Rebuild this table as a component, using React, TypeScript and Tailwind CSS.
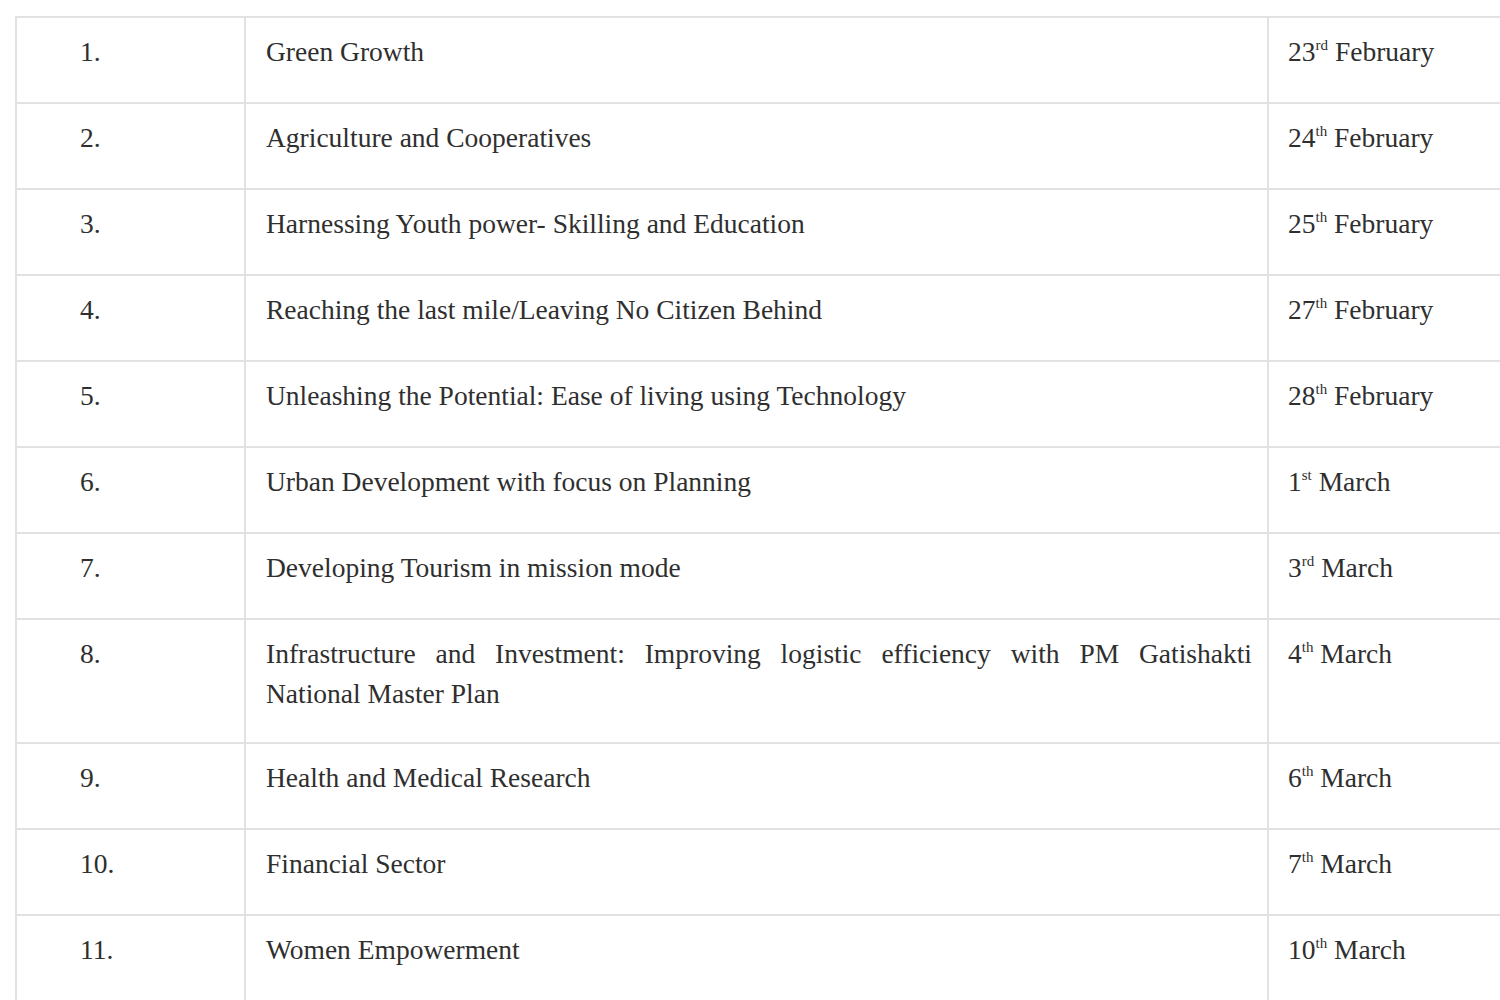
import React from "react";

type Row = { n: string; topic: string; day: string; sup: string; month: string; tall?: boolean };

const rows: Row[] = [
  { n: "1.", topic: "Green Growth", day: "23", sup: "rd", month: "February" },
  { n: "2.", topic: "Agriculture and Cooperatives", day: "24", sup: "th", month: "February" },
  { n: "3.", topic: "Harnessing Youth power- Skilling and Education", day: "25", sup: "th", month: "February" },
  { n: "4.", topic: "Reaching the last mile/Leaving No Citizen Behind", day: "27", sup: "th", month: "February" },
  { n: "5.", topic: "Unleashing the Potential: Ease of living using Technology", day: "28", sup: "th", month: "February" },
  { n: "6.", topic: "Urban Development with focus on Planning", day: "1", sup: "st", month: "March" },
  { n: "7.", topic: "Developing Tourism in mission mode", day: "3", sup: "rd", month: "March" },
  {
    n: "8.",
    topic: "Infrastructure and Investment: Improving logistic efficiency with PM Gatishakti|National Master Plan",
    day: "4",
    sup: "th",
    month: "March",
    tall: true,
  },
  { n: "9.", topic: "Health and Medical Research", day: "6", sup: "th", month: "March" },
  { n: "10.", topic: "Financial Sector", day: "7", sup: "th", month: "March" },
  { n: "11.", topic: "Women Empowerment", day: "10", sup: "th", month: "March" },
];

export default function App() {
  return (
    <div className="w-[1500px] h-[1000px] overflow-hidden bg-white pt-[16px] pl-[15px]">
      <table className="border-collapse w-[1500px] text-[27.5px] leading-[40px] text-[#2f2f2f] font-['Liberation_Serif','Times_New_Roman',serif]">
        <colgroup>
          <col className="w-[229px]" />
          <col className="w-[1023px]" />
          <col />
        </colgroup>
        <tbody>
          {rows.map((r) => {
            const parts = r.topic.split("|");
            return (
              <tr key={r.n} className={r.tall ? "h-[124px]" : "h-[86px]"}>
                <td className="border-2 border-[#e2e2e2] align-top pl-[63px] pt-[14px] font-['Liberation_Serif',serif]">
                  {r.n}
                </td>
                <td className="border-2 border-[#e2e2e2] align-top pl-[20px] pr-[15px] pt-[14px] font-['Liberation_Serif',serif]">
                  {parts.length > 1 ? (
                    <>
                      <div className="text-justify [text-align-last:justify]">{parts[0]}</div>
                      <div>{parts[1]}</div>
                    </>
                  ) : (
                    r.topic
                  )}
                </td>
                <td className="border-2 border-[#e2e2e2] align-top pl-[19px] pt-[14px] whitespace-nowrap font-['Liberation_Serif',serif]">
                  {r.day}
                  <sup className="text-[15px] -top-[11px]">{r.sup}</sup> {r.month}
                </td>
              </tr>
            );
          })}
        </tbody>
      </table>
    </div>
  );
}
